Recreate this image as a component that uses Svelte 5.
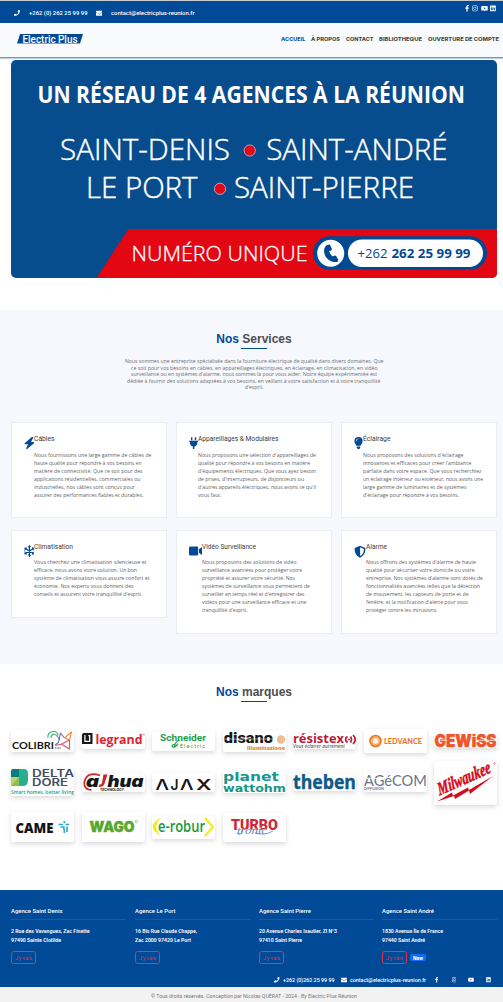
<script>
  const icons = {
    phone: { box: '0 0 512 512', d: 'M493 25 389 1c-11-3-23 3-27 14l-48 112c-4 10-1 21 7 28l61 50c-36 77-99 139-177 177l-50-61c-7-8-18-11-28-7L15 362c-11 4-17 16-14 27l24 104c3 11 12 19 24 19 256 0 463-207 463-463 0-12-8-21-19-24z' },
    mail: { box: '0 0 512 512', d: 'M502 191c4-3 10 0 10 4v205c0 26-22 48-48 48H48c-26 0-48-22-48-48V195c0-4 6-7 10-4 22 18 52 40 154 114 21 15 57 48 92 48s71-33 92-48c102-74 132-96 154-114zM256 320c23 0 57-29 73-42 133-96 143-105 174-129 6-4 9-11 9-19v-18c0-27-22-48-48-48H48C22 64 0 85 0 112v18c0 8 3 15 9 19 31 24 41 33 174 129 16 13 50 42 73 42z' },
    facebook: { box: '0 0 320 512', d: 'm279 288 14-93h-89v-60c0-25 13-50 53-50h40V7s-37-7-72-7c-73 0-121 44-121 125v70H23v93h81v224h100V288z' },
    instagram: { box: '0 0 448 512', d: 'M130 32h188a130 130 0 0 1 130 130v188a130 130 0 0 1-130 130H130A130 130 0 0 1 0 350V162A130 130 0 0 1 130 32zm0 42c-50 0-88 38-88 88v188c0 50 38 88 88 88h188c50 0 88-38 88-88V162c0-50-38-88-88-88zM224 141a115 115 0 1 1 0 230 115 115 0 0 1 0-230zm0 40a75 75 0 1 0 0 150 75 75 0 0 0 0-150zM344 109a27 27 0 1 1 0 54 27 27 0 0 1 0-54z' },
    youtube: { box: '0 0 576 512', d: 'M550 124c-7-24-25-42-49-49-42-11-213-11-213-11S117 64 75 75c-24 7-42 25-49 49-11 42-11 132-11 132s0 90 11 132c7 24 25 42 49 49 42 11 213 11 213 11s171 0 213-11c24-7 42-25 49-49 11-42 11-132 11-132s0-90-11-132zM232 338V175l143 81z' },
    linkedin: { box: '0 0 448 512', d: 'M416 32H32C14 32 0 47 0 64v384c0 18 14 32 32 32h384c18 0 32-14 32-32V64c0-17-14-32-32-32zM135 416H69V202h66zM102 173a38 38 0 1 1 0-77 38 38 0 0 1 0 77zm282 243h-66V312c0-25-1-57-35-57s-40 27-40 55v106h-66V202h63v29h1c9-17 31-35 63-35 67 0 80 45 80 103z' }
  };

  const socials = ['facebook', 'instagram', 'youtube', 'linkedin'];

  const nav = [
    { t: 'ACCUEIL', w: 24.5, on: true },
    { t: 'À PROPOS', w: 29 },
    { t: 'CONTACT', w: 27.5 },
    { t: 'BIBLIOTHEQUE', w: 43 },
    { t: 'OUVERTURE DE COMPTE', w: 71 }
  ];

  const intro = [
    ['Nous sommes une entreprise spécialisée dans la fourniture électrique de qualité dans divers domaines. Que', 258.5],
    ['ce soit pour vos besoins en câbles, en appareillages électriques, en éclairage, en climatisation, en vidéo', 246.5],
    ["surveillance ou en systèmes d'alarme, nous sommes là pour vous aider. Notre équipe expérimentée est", 246],
    ['dédiée à fournir des solutions adaptées à vos besoins, en veillant à votre satisfaction et à votre tranquillité', 253.5],
    ["d'esprit.", 18.5]
  ];

  const services = [
    { icon: 'bolt', iw: 10.5, title: 'Câbles', tw: 20.5, lines: [
      ['Nous fournissons une large gamme de câbles de', 117.5],
      ['haute qualité pour répondre à vos besoins en', 107.5],
      ['matière de connectivité. Que ce soit pour des', 108.5],
      ['applications résidentielles, commerciales ou', 106.5],
      ['industrielles, nos câbles sont conçus pour', 101],
      ['assurer des performances fiables et durables.', 109.5]] },
    { icon: 'plug', iw: 9, title: 'Appareillages & Modulaires', tw: 80.5, lines: [
      ["Nous proposons une sélection d'appareillages de", 118],
      ['qualité pour répondre à vos besoins en matière', 112],
      ["d'équipements électriques. Que vous ayez besoin", 118],
      ["de prises, d'interrupteurs, de disjoncteurs ou", 106],
      ["d'autres appareils électriques, nous avons ce qu'il", 118],
      ['vous faut.', 23.5]] },
    { icon: 'bulb', iw: 9, title: 'Éclairage', tw: 27.5, lines: [
      ["Nous proposons des solutions d'éclairage", 100.5],
      ["innovantes et efficaces pour créer l'ambiance", 108.5],
      ['parfaite dans votre espace. Que vous recherchiez', 118.5],
      ['un éclairage intérieur ou extérieur, nous avons une', 120],
      ['large gamme de luminaires et de systèmes', 103.5],
      ["d'éclairage pour répondre à vos besoins.", 96]] },
    { icon: 'snow', iw: 10.5, title: 'Climatisation', tw: 39, lines: [
      ['Vous cherchez une climatisation silencieuse et', 112.5],
      ['efficace, nous avons votre solution. Un bon', 103],
      ['système de climatisation vous assure confort et', 115.5],
      ['économie. Nos experts vous donnent des', 99.5],
      ["conseils et assurent votre tranquillité d'esprit.", 108.5]] },
    { icon: 'video', iw: 13.7, title: 'Vidéo Surveillance', tw: 54, lines: [
      ['Nous proposons des solutions de vidéo', 94.5],
      ['surveillance avancées pour protéger votre', 100],
      ['propriété et assurer votre sécurité. Nos', 93],
      ['systèmes de surveillance vous permettent de', 108],
      ["surveiller en temps réel et d'enregistrer des", 102.5],
      ['vidéos pour une surveillance efficace et une', 104.5],
      ["tranquillité d'esprit.", 45.5]] },
    { icon: 'shield', iw: 12, title: 'Alarme', tw: 21, lines: [
      ["Nous offrons des systèmes d'alarme de haute", 110],
      ['qualité pour sécuriser votre domicile ou votre', 108.5],
      ["entreprise. Nos systèmes d'alarme sont dotés de", 117],
      ['fonctionnalités avancées telles que la détection', 114],
      ['de mouvement, les capteurs de porte et de', 102.5],
      ["fenêtre, et la notification d'alerte pour vous", 102],
      ['protéger contre les intrusions.', 71.5]] }
  ];

  const brands = [
    ['colibri', 22], ['legrand', 16], ['schneider', 19], ['disano', 21], ['resistex', 16], ['ledvance', 24], ['gewiss', 14],
    ['delta', 27], ['dahua', 19], ['ajax', 19], ['planet', 21], ['theben', 17], ['agecom', 19], ['milwaukee', 44],
    ['came', 30], ['wago', 30], ['erobur', 23], ['turbo', 29]
  ];

  const agencies = [
    { n: 'Agence Saint Denis', nw: 51.5, a: ['2 Rue des Vavangues, Zac Finette', 78.5], b: ['97490 Sainte Clotilde', 50] },
    { n: 'Agence Le Port', nw: 40.5, a: ['16 Bis Rue Claude Chappe,', 62], b: ['Zac 2000 97420 Le Port', 56] },
    { n: 'Agence Saint Pierre', nw: 52, a: ['20 Avenue Charles Isautier, ZI N°3', 78], b: ['97410 Saint Pierre', 43] },
    { n: 'Agence Saint André', nw: 52, a: ['1830 Avenue Île de France', 61], b: ['97440 Saint André', 43], isNew: true }
  ];
</script>

{#snippet line(t, w, h, cls)}
  <svg class="line {cls}" style="width:{w}px;height:{h}px"><text x="0" y={h / 2} dy=".36em" textLength={w} lengthAdjust="spacingAndGlyphs">{t}</text></svg>
{/snippet}

{#snippet icon(name, w, h)}
  <svg class="icon" width={w} height={h} viewBox={icons[name].box}><path d={icons[name].d} fill="#fff" fill-rule="evenodd" /></svg>
{/snippet}

<div class="page">
  <div class="topbar">
    <div class="reach">
      {@render icon('phone', 6, 6)}
      {@render line('+262 (0) 262 25 99 99', 58.5, 8, 'top')}
      <span class="gap"></span>
      {@render icon('mail', 6.5, 6.5)}
      {@render line('contact@electricplus-reunion.fr', 83.5, 8, 'top')}
    </div>
    <div class="social">
      {#each socials as s, i}{@render icon(s, [4.2, 5.8, 7, 5.8][i], 6.6)}{/each}
    </div>
  </div>

  <header>
    <svg class="brand" width="66" height="11" viewBox="0 0 66 11">
      <path d="M3 0h63l-3 9.500H0z" fill="#004a98" />
      <text x="5.500" y="8.600" textLength="55" lengthAdjust="spacingAndGlyphs" font-family="Roboto" font-size="10" font-weight="500" fill="#fff">Electric Plus</text>
    </svg>
    <nav>
      {#each nav as n}{@render line(n.t, n.w, 8, n.on ? 'nav on' : 'nav')}{/each}
    </nav>
  </header>

  <svg class="banner" viewBox="11 60 486 218">
    <path fill="#074c8c" d="M11 60h486v218H11z" />
    <path fill="#e30613" d="M128.500 229H497v49H96.500z" />
    <g fill="#fff" font-family="Open Sans">
      <text x="37.500" y="102.600" font-size="22.700" font-weight="700" textLength="427.500" lengthAdjust="spacingAndGlyphs">UN RÉSEAU DE 4 AGENCES À LA RÉUNION</text>
      <g font-size="29.500" font-weight="300" stroke="#fff" stroke-width=".45">
        <text x="60" y="159.600" textLength="170" lengthAdjust="spacingAndGlyphs">SAINT-DENIS</text>
        <text x="266.200" y="159.600" textLength="181.500" lengthAdjust="spacingAndGlyphs">SAINT-ANDRÉ</text>
        <text x="86" y="198.200" textLength="111.500" lengthAdjust="spacingAndGlyphs">LE PORT</text>
        <text x="234" y="198.200" textLength="180" lengthAdjust="spacingAndGlyphs">SAINT-PIERRE</text>
      </g>
      <text x="131.500" y="260.700" font-size="20.700" font-weight="300" stroke="#fff" stroke-width=".3" textLength="176" lengthAdjust="spacingAndGlyphs">NUMÉRO UNIQUE</text>
    </g>
    <g fill="#e30613" stroke="#b9c6dc" stroke-width=".8">
      <circle cx="249.700" cy="150.500" r="5.600" /><circle cx="220" cy="188.800" r="5.600" />
    </g>
    <rect x="313" y="236.300" width="174" height="33.500" rx="16.750" fill="#004a94" />
    <circle cx="330.700" cy="253.300" r="13.500" fill="#fff" />
    <rect x="348" y="239.400" width="135" height="27.600" rx="13.800" fill="#fff" />
    <path d="M327.500 244.800c-6.500 3-4 17.200 8.500 17.300l1.500-.8-2.700-5.200-1.800.5c-2.300-1.500-3.700-4-3.800-6.300l1.500-1z" fill="#004a94" />
    <g fill="none" stroke="#004a94" stroke-width="3.400" stroke-linecap="round"><path d="m328.800 246.200 1.300 3M334.800 257.200l1.700 3" /></g>
    <g fill="#004a94" font-family="Open Sans" font-size="13">
      <text x="357.500" y="258" textLength="30" lengthAdjust="spacingAndGlyphs">+262</text>
      <text x="391.500" y="258" font-weight="700" textLength="79" lengthAdjust="spacingAndGlyphs">262 25 99 99</text>
    </g>
  </svg>

  <section class="services">
    <h2><b>Nos</b> Services</h2>
    <div class="intro">
      {#each intro as l}{@render line(l[0], l[1], 6.5, 'lead')}{/each}
    </div>
    <div class="cards">
      {#each services as s, i}
        <article class:second={i > 2}>
          <svg class="glyph" width={s.iw} height="13" viewBox="0 0 {s.iw} 13" fill="#004a98">
            {#if s.icon === 'bolt'}
              <path d="M7.800 0 .7 6.300c-.3.400-.1.900.4.900h3L2.200 11.300c-.3.700.4 1.100.9.700l7.200-6.100c.5-.4.200-1-.3-1H7L9.200.800C9.400.1 8.500-.5 7.800 0z" />
            {:else if s.icon === 'plug'}
              <path d="M2 .3h1.400v3H2zM5.800.3h1.400v3H5.800zM.3 3.800H9v1.300h-.6c0 2.700-.8 4-3 4.400V12H3.900V9.500C1.700 9.100.9 7.800.9 5.100H.3z" />
            {:else if s.icon === 'bulb'}
              <path fill-rule="evenodd" d="M2.500 8.700C2.300 7.500.4 6.600.4 4.200a4.100 4.100 0 0 1 8.200 0c0 2.400-1.900 3.300-2.100 4.500zM2 4.200h.6c0-1.300.8-2.100 2-2.100v-.6C3 1.500 2 2.600 2 4.200zM2.600 9.500h3.800c0 3.400-3.800 3.400-3.800 0z" />
            {:else if s.icon === 'snow'}
              <g fill="none" stroke="#004a98" stroke-width="1.200" stroke-linecap="round">
                <path d="M5.400.600v10.800M.8 3.300l9.200 5.400M.8 8.700 10 3.300" />
                <path stroke-width=".9" d="M4 1.500l1.400 1.300 1.400-1.300M4 10.500l1.400-1.300 1.400 1.300M.5 5l1.900-.6L2 2.400M10.300 5l-1.900-.6.4-2M.5 7l1.900.6-.4 2M10.300 7l-1.900.6.4 2" />
              </g>
            {:else if s.icon === 'video'}
              <path d="M1.500 1.500h6.200q1.500 0 1.500 1.500v6q0 1.500-1.500 1.500H1.500Q0 10.500 0 9V3q0-1.500 1.500-1.500zM10 4.200l2.600-1.900q1.100-.5 1.100.7v6q0 1.200-1.100.7L10 7.800z" />
            {:else}
              <path fill-rule="evenodd" d="M6 .700 11.300 3c.5 5-2.300 8.400-5.300 9.700C3 11.400.2 8 .7 3zM6.100 2.300v8.800C8.400 9.900 10 7.500 9.900 4z" />
            {/if}
          </svg>
          <div class="body">
            {@render line(s.title, s.tw, 8, 'name')}
            <div class="text">
              {#each s.lines as l}{@render line(l[0], l[1], 8.1, 'copy')}{/each}
            </div>
          </div>
        </article>
      {/each}
    </div>
  </section>

  <section class="marques">
    <h2><b>Nos</b> marques</h2>
    <div class="logos">
      {#each brands as [id, h]}
        <svg class="logo" width="63" height={h} viewBox="0 0 63 {h}">
          {#if id === 'colibri'}
            <text x="1" y="18.500" font-family="Lato" font-weight="700" font-size="10" textLength="42" lengthAdjust="spacingAndGlyphs" fill="#161616">COLIBRI</text>
            <g fill="none" stroke-width="1.100" stroke-linejoin="round"><path d="M37 8c-1-4 2-6.500 5.500-6.500 3 0 4.500 1.500 4.500 4M40 8c0-4 4-5 6-2" stroke="#48ae79" /><path d="m46 6 2.500 3-1.500 4-3 2" stroke="#4b83b8" /><path d="M48 10 49.500 3l4 5" stroke="#7d61a7" /><path d="m53.500 8 7-6-2 8-5-2" stroke="#ea8b42" /><path d="M58.500 10v9l-8-5-6 1.500M58.500 10l-8 4" stroke="#e64f62" /></g>
            <path d="M44 18h6" stroke="#333" stroke-width="1" stroke-dasharray="1 .5" />
          {:else if id === 'legrand'}
            <path fill="#171717" fill-rule="evenodd" d="M0 0h10.500v11H0zM2.300 2v7h6V2h-2v1.200h.7v4.500H3.500V2z" />
            <text x="13.500" y="11" font-family="Open Sans" font-weight="700" font-size="12.500" textLength="47" lengthAdjust="spacingAndGlyphs" fill="#e2232e">legrand</text>
            <circle cx="61.700" cy="1.500" r=".7" fill="none" stroke="#555" stroke-width=".4" />
          {:else if id === 'schneider'}
            <g fill="#1ea04b"><text x="8" y="8.800" font-family="Roboto" font-weight="700" font-size="9.500" textLength="46" lengthAdjust="spacingAndGlyphs">Schneider</text><text x="28" y="15.500" font-family="Roboto" font-size="5.500" textLength="25" lengthAdjust="spacing">Electric</text></g>
            <path d="M27.500 8.500q-4 1-4.500 4t-2.500 2.500q-1.500-2 2.500-3M20.500 15q4 .5 5-3.500" fill="none" stroke="#1ea04b" stroke-width="1.200" />
          {:else if id === 'disano'}
            <text x=".800" y="12.300" font-family="Roboto" font-weight="900" font-size="14.500" textLength="49" lengthAdjust="spacingAndGlyphs" fill="#181818">disano</text>
            <path d="M1 8h49" stroke="#fff" stroke-width=".5" /><circle cx="58" cy="8.500" r="4.200" fill="#f0bd90" />
            <text x="24" y="19" font-family="Open Sans" font-weight="800" font-size="5.500" textLength="38" lengthAdjust="spacingAndGlyphs" fill="#e08942">illuminazione</text>
          {:else if id === 'resistex'}
            <text x="0" y="9.800" font-family="Open Sans" font-weight="700" font-size="11.500" textLength="51" lengthAdjust="spacingAndGlyphs" fill="#b91d35">résistex</text>
            <g fill="none" stroke="#b91d35" stroke-width="1.700"><path d="M54.500 3.500q-4 3 0 6M57.500 3.500q2 3 0 6M60 2q4.500 4.500 0 9" /></g><circle cx="56" cy="6.500" r="1" fill="#b91d35" />
            <text x="0" y="14.500" font-family="Open Sans" font-style="italic" font-size="4.600" textLength="52" lengthAdjust="spacingAndGlyphs" fill="#333">Vous éclairer autrement</text>
          {:else if id === 'ledvance'}
            <circle cx="11.500" cy="12" r="5.500" fill="#f8b27b" stroke="#ed7625" stroke-width="1.600" /><circle cx="11.500" cy="12" r="2.700" fill="#fff0e2" />
            <text x="20" y="14.700" font-family="Lato" font-weight="900" font-size="7.400" textLength="38" lengthAdjust="spacingAndGlyphs" fill="#ed7625">LEDVANCE</text>
          {:else if id === 'gewiss'}
            <text x=".500" y="13.200" font-family="Inter" font-weight="900" font-size="17" textLength="62" lengthAdjust="spacingAndGlyphs" fill="#ee562c" stroke="#ee562c" stroke-width=".5">GEWiSS</text>
            <path d="M7 6.300h6M43 6.300h19" stroke="#fff" stroke-width=".7" />
          {:else if id === 'delta'}
            <path fill="#087d7d" d="M0 0h8v8H0z" /><path fill="#27af8f" d="M8 0h5q4 0 4 5v6q0 6-5 6H8z" /><path fill="#b9d46a" d="M0 8h8v9H0z" /><path fill="#8fbe4c" d="m0 17 8-9v9z" />
            <g fill="#3f4d61" font-family="Inter" font-weight="600" font-size="9.800"><text x="21" y="7.500" textLength="42" lengthAdjust="spacingAndGlyphs">DELTA</text><text x="21" y="16.500" textLength="36" lengthAdjust="spacingAndGlyphs">DORE</text></g>
            <text x="0" y="25" font-family="Open Sans" font-weight="600" font-size="5" textLength="63" lengthAdjust="spacingAndGlyphs" fill="#1ba184">Smart homes, better living</text>
          {:else if id === 'dahua'}
            <path d="M18 2.500Q6-2 2.500 8q-1.500 8.500 7 9" fill="none" stroke="#d5202c" stroke-width="1.700" />
            <g font-family="Inter" font-style="italic" font-weight="900" font-size="15.500"><text x="4" y="13.600" textLength="13" lengthAdjust="spacingAndGlyphs" fill="#171717">a</text><text x="25.500" y="13.600" textLength="36" lengthAdjust="spacingAndGlyphs" fill="#171717">hua</text></g>
            <path d="M21.500 1.500h4l-3 9q-1 3.500-6 3.500l1-2.500q2 0 2.500-1.500z" fill="#d5202c" />
            <text x="18" y="18.300" font-family="Inter" font-weight="700" font-size="3.200" textLength="24" lengthAdjust="spacingAndGlyphs" fill="#222">TECHNOLOGY</text>
          {:else if id === 'ajax'}
            <g font-family="Inter" font-weight="600" font-size="14.500" fill="#191919"><text x="3.500" y="17" textLength="13.500" lengthAdjust="spacingAndGlyphs">A</text><text x="18.500" y="17" textLength="8" lengthAdjust="spacingAndGlyphs">J</text><text x="28" y="17" textLength="13.500" lengthAdjust="spacingAndGlyphs">A</text><text x="44" y="17" textLength="15.500" lengthAdjust="spacingAndGlyphs">X</text></g>
            <path fill="#fff" d="M8.600 12h3.300l2 5.200H6.500zM33.100 12h3.300l2 5.200H31z" />
          {:else if id === 'planet'}
            <g fill="#17968c" font-family="DejaVu Sans" font-weight="700" font-size="10"><text x="0" y="9.200" font-size="11.500" textLength="56" lengthAdjust="spacingAndGlyphs">planet</text><text x="0" y="20" textLength="63" lengthAdjust="spacingAndGlyphs">wattohm</text></g>
          {:else if id === 'theben'}
            <text x="0" y="15" font-family="Open Sans" font-weight="700" font-size="19" textLength="63" lengthAdjust="spacingAndGlyphs" fill="#11598a" stroke="#11598a" stroke-width=".4">theben</text>
          {:else if id === 'agecom'}
            <g fill="#68758a" font-family="Lato"><text x="0" y="12.500" font-size="15" font-weight="400" textLength="28" lengthAdjust="spacingAndGlyphs">AGé</text><text x="28" y="12.500" font-size="15.500" textLength="35" lengthAdjust="spacingAndGlyphs">COM</text><text x="0" y="16.800" font-size="3.500" font-weight="700" textLength="20" lengthAdjust="spacingAndGlyphs">DIFFUSION</text></g>
            <path d="M3 5.500h16" stroke="#fff" stroke-width=".8" />
          {:else if id === 'milwaukee'}
            <g fill="#d30d1b"><text transform="translate(5.500 34.500) rotate(-24) skewX(-8)" x="0" y="0" font-family="Liberation Serif" font-style="italic" font-weight="700" font-size="18" textLength="57" lengthAdjust="spacingAndGlyphs" stroke="#d30d1b" stroke-width=".6">Milwaukee</text><path d="m3 40.500 15-9 1 3 15-8 1 2.500L59 15 36 33l-1-3.500-14 8.500-1-3z" /></g><circle cx="60.500" cy="2.500" r=".9" fill="none" stroke="#d30d1b" stroke-width=".4" />
          {:else if id === 'came'}
            <text x="4.500" y="21" font-family="Open Sans" font-weight="800" font-size="13.500" textLength="38" lengthAdjust="spacingAndGlyphs" fill="#141414">CAME</text>
            <path d="M47.500 12.500H52M54.500 12.500H58M53.300 9v2.300M49.500 15h3.300v2.500M53.300 17v4M56 14.500V20" fill="none" stroke="#2ba5d4" stroke-width="1.600" />
          {:else if id === 'wago'}
            <text x="7.500" y="20" font-family="Inter" font-weight="900" font-size="14.500" textLength="45" lengthAdjust="spacingAndGlyphs" fill="#58a82f" stroke="#58a82f" stroke-width=".4">WAGO</text>
            <path d="m18.500 21 6.500-13" stroke="#fff" stroke-width=".8" /><circle cx="54.500" cy="9.500" r="1.200" fill="none" stroke="#58a82f" stroke-width=".5" />
          {:else if id === 'erobur'}
            <path d="M9.500 1.500Q-8 10 9.500 20.500Q-1 11 9.500 1.500z" fill="#f8e817" /><path d="m53 2 8 9-8 9" fill="none" stroke="#f8e817" stroke-width="2.200" />
            <text x="6" y="15.500" font-family="Open Sans" font-weight="600" font-size="15.500" textLength="47" lengthAdjust="spacingAndGlyphs" fill="#16983c">e-robur</text>
          {:else}
            <text x="8" y="17" font-family="Roboto" font-weight="900" font-size="14.500" textLength="47" lengthAdjust="spacingAndGlyphs" fill="#cc2837">TURBO</text>
            <text x="14" y="20.500" font-family="Liberation Serif" font-style="italic" font-size="11" textLength="30" lengthAdjust="spacingAndGlyphs" fill="#5b81ab" stroke="#fff" stroke-width=".5" paint-order="stroke">tronic</text>
            <path d="M14 20q4 4 5-3M32 20q10 3 18-2" fill="none" stroke="#5b81ab" stroke-width=".8" />
          {/if}
        </svg>
      {/each}
    </div>
  </section>

  <footer>
    <div class="agencies">
      {#each agencies as a}
        <div class="agency">
          {@render line(a.n, a.nw, 8, 'head')}
          <hr />
          {@render line(a.a[0], a.a[1], 9, 'addr')}
          {@render line(a.b[0], a.b[1], 9, 'addr')}
          <div class="act">
            <span class="go">{@render line("J'y vais", 17, 8, 'red')}</span>
            {#if a.isNew}<span class="new">{@render line('New', 10, 6, 'tag')}</span>{/if}
          </div>
        </div>
      {/each}
    </div>
    <div class="contact">
      {@render icon('phone', 5.5, 5.5)}
      {@render line('+262 (0)262 25 99 99', 51.5, 8, 'foot')}
      <span class="sep"></span>
      {@render icon('mail', 6, 6)}
      {@render line('contact@electricplus-reunion.fr', 76, 8, 'foot')}
      <div class="wide">
        {#each socials as s, i}<span>{@render icon(s, [3.5, 4.8, 6, 4.8][i], 5.5)}</span>{/each}
      </div>
    </div>
  </footer>
  <div class="legal">
    {@render line('© Tous droits réservés. Conception par Nicolas QUÉRAT - 2024 - By Electric Plus Réunion', 206, 8, 'rights')}
  </div>
</div>

<style>
  .page { width: 503px; height: 1002px; background: #fff; font-family: Roboto, sans-serif; overflow: hidden; display: flex; flex-direction: column; box-sizing: border-box; }
  svg { display: block; flex: none; }
  .line { overflow: visible; }
  .topbar { height: 23px; box-sizing: border-box; flex: none; border-top: 1px solid #c8ccce; background: #004a98; display: flex; justify-content: space-between; padding: 0 7px 0 14px; }
  .reach { display: flex; align-items: center; gap: 8.600px; height: 23.500px; }
  .reach .gap { width: 0; margin-right: -8.600px; }
  .social { display: flex; align-items: center; gap: 2.600px; height: 15px; }
  .top { fill: #fff; font: 500 6px Roboto; }
  header { height: 34px; flex: none; background: #f8fafc; display: flex; justify-content: space-between; padding: 0 4px 0 16.500px; border-bottom: 1px solid #6f9bc8; box-shadow: 0 1px 1px #bcd0e6; align-items: flex-start; }
  .brand { margin-top: 11px; }
  nav { display: flex; gap: 5.700px; margin-top: 12px; }
  .nav { fill: #4b4b4b; font: 800 5.300px Inter; }
  .on { fill: #0f5fb4; }
  .banner { width: 486px; height: 218px; border-radius: 5px; margin: 2px 0 32px 11px; }
  .services { height: 354px; flex: none; background: #f6f8fd; box-sizing: border-box; padding: 21px 6px 0 11px; }
  h2 { margin: 0 auto; height: 16px; width: 90px; text-align: center; font: 700 12px/16px "Liberation Sans", sans-serif; color: #4d4d50; position: relative; white-space: nowrap; }
  h2 b { color: #004a98; }
  h2::after { content: ''; position: absolute; width: 26px; height: 1px; background: #004a98; left: 32px; top: 17px; }
  .intro { display: flex; flex-direction: column; align-items: center; margin: 11px 0 31.500px; }
  .lead { fill: #6d6e71; font: 500 5.300px Open Sans; }
  .cards { display: grid; grid-template-columns: repeat(3, 156px); gap: 12px 9px; align-items: start; }
  article { background: #fff; border: 1px solid #eaeef3; box-sizing: border-box; min-height: 96px; display: flex; padding: 10.600px 0 0 11.600px; }
  article.second { min-height: 0; padding-bottom: 18.900px; }
  .glyph { margin-top: 3.600px; }
  .name { fill: #3c3c3c; font: 400 7.200px Roboto; }
  .text { margin-top: 9px; }
  .second .text { margin-top: 8px; }
  .copy { fill: #626265; font: 500 5.700px Open Sans; }
  .marques { height: 226px; flex: none; box-sizing: border-box; padding: 20px 6px 0 11px; }
  .logos { display: grid; grid-template-columns: repeat(7, 63px); grid-template-rows: 24px 44px 30px; gap: 7.500px; align-items: center; margin-top: 29px; }
  .logo { background: #fff; border-radius: 2px; box-shadow: 0 2px 5px rgba(0, 0, 0, .15); }
  footer { height: 97px; flex: none; background: #004a98; box-sizing: border-box; padding: 17px 6px 0 11px; }
  .agencies { display: grid; grid-template-columns: repeat(4, 115px); column-gap: 8.800px; }
  hr { height: 1px; border: 0; background: #e30b25; margin: 4px 0 7px; }
  .head { fill: #fff; font: 500 6px Roboto; }
  .addr { fill: #fff; font: 600 5.400px Roboto; }
  .act { display: flex; gap: 3px; align-items: center; margin-top: 6px; }
  .go { border: 1px solid #dc3545; border-radius: 2.500px; width: 25px; height: 13px; box-sizing: border-box; display: grid; place-content: center; }
  .red { fill: #dc3545; font: 400 5.500px Roboto; }
  .new { background: #0d6efd; border-radius: 2px; width: 16px; height: 7px; display: grid; place-content: center; }
  .tag { fill: #fff; font: 800 4.500px Roboto; }
  .contact { display: flex; align-items: center; gap: 3.300px; margin: 12px 0 0 263px; height: 8px; }
  .contact .sep { width: 3px; }
  .foot { fill: #fff; font: 500 5.400px Roboto; }
  .wide { display: flex; margin-left: -1.500px; }
  .wide span { width: 17.300px; display: grid; place-content: center; }
  .legal { height: 15px; background: #f2f2f2; display: grid; place-content: center; padding: 3px 0 0 5px; box-sizing: border-box; flex: none; }
  .rights { fill: #777; font: 400 5.300px Roboto; }
</style>
